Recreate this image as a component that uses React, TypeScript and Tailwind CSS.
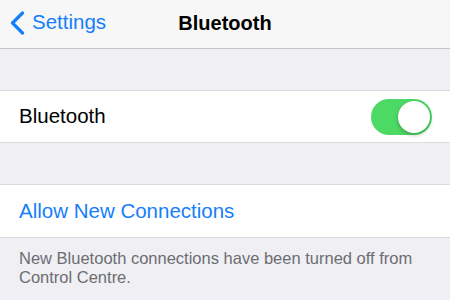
import React, { useState } from 'react';

const font = { fontFamily: '"Liberation Sans", Arial, sans-serif' };

const BackChevron: React.FC = () => (
  <svg width="15" height="24" viewBox="0 0 15 24" fill="none">
    <polyline points="12.5,2 2.5,12 12.5,22" stroke="#157efb" strokeWidth="3.2" strokeLinecap="round" strokeLinejoin="round" />
  </svg>
);

const Toggle: React.FC<{ on: boolean; onClick: () => void }> = ({ on, onClick }) => (
  <button
    onClick={onClick}
    className={`flex h-[36px] w-[61px] items-center rounded-full p-[2px] ${on ? 'justify-end bg-[#4cd964]' : 'justify-start bg-[#e5e5ea]'}`}
  >
    <span className="block h-[32px] w-[32px] rounded-full bg-white shadow-[0_2px_4px_rgba(0,0,0,0.25)]" />
  </button>
);

const App: React.FC = () => {
  const [bluetoothOn, setBluetoothOn] = useState(true);

  return (
    <div className="h-[300px] w-[450px] overflow-hidden bg-[#efeff4]" style={font}>
      {/* Nav bar */}
      <header className="grid h-[49px] grid-cols-[1fr_auto_1fr] items-center border-b border-[#c4c4c8] bg-[#f7f7f8] pb-[3px]">
        <a href="#" className="flex items-center pl-[10px] text-[20.5px] text-[#157efb]">
          <BackChevron />
          <span className="ml-[7px]">Settings</span>
        </a>
        <h1 className="text-[20px] font-bold text-black">Bluetooth</h1>
        <div />
      </header>

      {/* Bluetooth toggle section */}
      <div className="mt-[41px] flex h-[53px] items-center justify-between border-y border-[#dcdce0] bg-white pl-[19px] pr-[18px]">
        <span className="text-[20.5px] text-black">Bluetooth</span>
        <Toggle on={bluetoothOn} onClick={() => setBluetoothOn(!bluetoothOn)} />
      </div>

      {/* Allow new connections */}
      <div className="mt-[41px] flex h-[54px] items-center border-y border-[#dcdce0] bg-white pl-[19px]">
        <span className="text-[20.5px] text-[#157efb]">Allow New Connections</span>
      </div>

      <p className="pl-[19px] pr-[19px] pt-[11px] text-[16.5px] leading-[19px] text-[#6d6d72]">
        New Bluetooth connections have been turned off from Control Centre.
      </p>
    </div>
  );
};

export default App;
